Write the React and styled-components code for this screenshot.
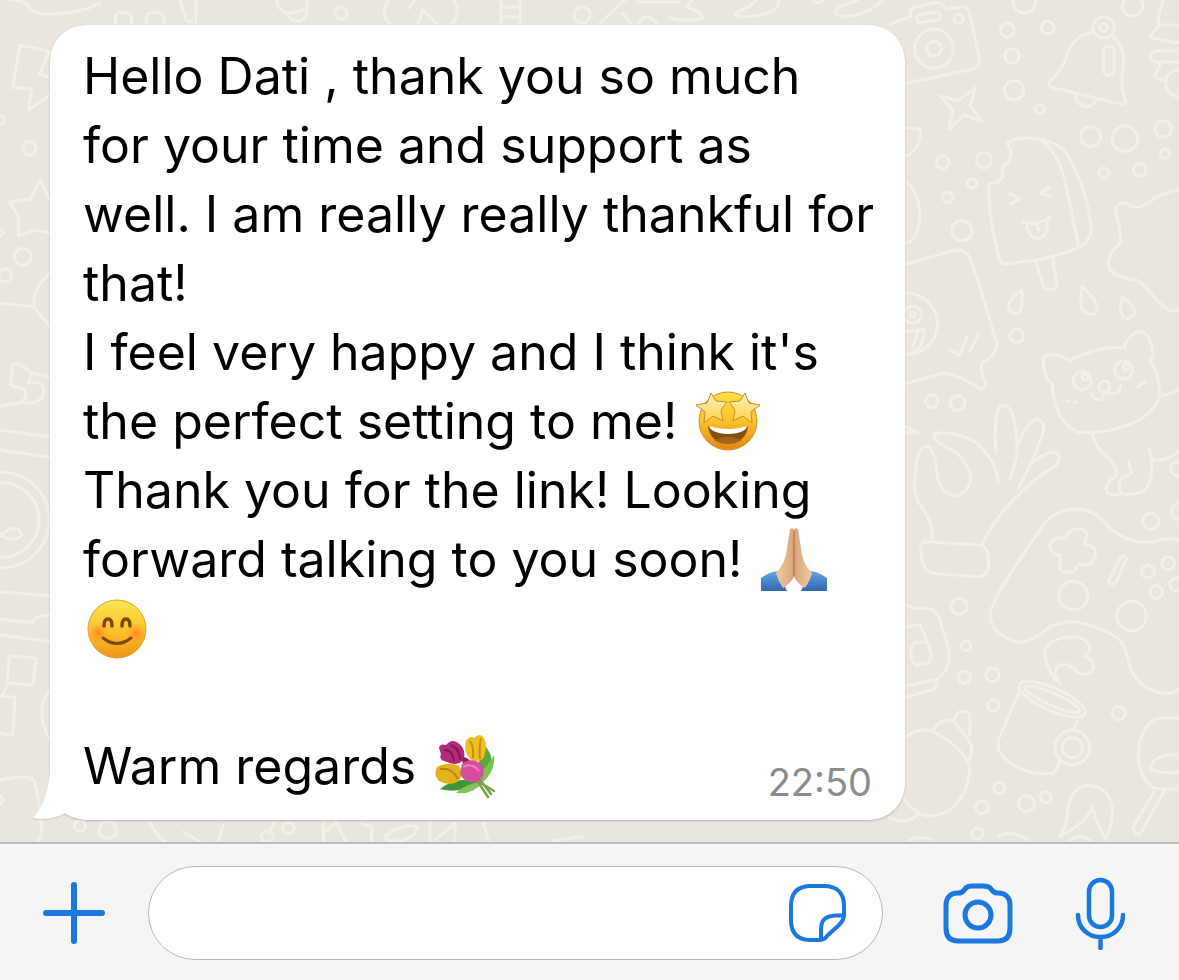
import React from "react";
import styled, { createGlobalStyle } from "styled-components";

const GlobalStyle = createGlobalStyle`
  * { box-sizing: border-box; }
  body { margin: 0; font-family: Inter, "Liberation Sans", sans-serif; }
`;

const Screen = styled.div`
  min-height: 100vh;
  display: flex;
  flex-direction: column;
`;

const Chat = styled.main`
  position: relative;
  flex: 1;
  padding: 25px 274px 22px 50px;
  background: #eae6dd;
  overflow: hidden;
`;

const Wallpaper = styled.svg`
  position: absolute;
  inset: 0;
  width: 100%;
  height: 100%;
  fill: none;
  stroke: #f4f0e9;
  stroke-width: 9;
  stroke-linecap: round;
  stroke-linejoin: round;
`;

const Bubble = styled.article`
  position: relative;
  padding: 17px 33px 19px;
  border-radius: 36px;
  background: #fff;
  box-shadow: 0 1px 2px rgba(60, 55, 45, 0.28);
`;

const Tail = styled.svg`
  position: absolute;
  left: -18px;
  bottom: 0;
  width: 60px;
  height: 50px;
  overflow: visible;
`;

const Message = styled.p`
  position: relative;
  margin: 0;
  min-height: 69px;
  font-size: 50px;
  line-height: 69px;
  color: #000;
  white-space: pre;
`;

const LastRow = styled.div`
  display: flex;
  justify-content: space-between;
  align-items: flex-end;
`;

const Time = styled.time`
  position: relative;
  font-size: 38px;
  line-height: 38px;
  color: #8b8b8e;
`;

const EmojiArt = styled.svg`
  width: 66px;
  height: 66px;
  margin-left: ${(p) => (p.$lineStart ? 0 : 4)}px;
  vertical-align: -15px;
`;

const Composer = styled.form`
  display: flex;
  align-items: center;
  padding: 22px 54px 20px 42px;
  border-top: 2px solid #bcbcb9;
  background: #f5f5f5;
`;

const IconButton = styled.button`
  flex: none;
  display: block;
  padding: 0;
  border: 0;
  background: none;
  margin-left: ${(p) => p.$gap || 0}px;
  svg {
    display: block;
    fill: none;
    stroke: #1a78de;
    stroke-linecap: round;
    stroke-linejoin: round;
  }
`;

const Field = styled.div`
  flex: 1;
  min-width: 0;
  display: flex;
  align-items: center;
  height: 94px;
  margin-left: 42px;
  padding: 0 35px;
  border: 1px solid #b8b8b8;
  border-radius: 47px;
  background: #fff;
`;

const TextInput = styled.input`
  flex: 1;
  width: 100%;
  min-width: 0;
  height: 80px;
  border: 0;
  outline: 0;
  background: transparent;
  font: 50px Inter, "Liberation Sans", sans-serif;
`;

const dots = (list) => list.map(([x, y, r]) => <circle key={`${x}-${y}-${r}`} cx={x} cy={y} r={r} />);

const Doodles = () => (
  <Wallpaper viewBox="0 0 1179 842" preserveAspectRatio="xMidYMid slice" aria-hidden="true">
    <g transform="translate(890 0) scale(0.3333)">
      <path d="M0 72L62 50Q56 25 80 20L135 8Q158 6 168 28L215 20Q236 20 240 45L268 175Q270 200 250 207L48 250" />
      <rect x="80" y="40" width="70" height="24" rx="10" transform="rotate(-8 115 52)" />
      {dots([[206, 57, 14], [132, 146, 58], [132, 146, 22], [403, 5, 34], [728, 18, 31], [352, 91, 21], [473, 83, 19], [366, 168, 22], [372, 271, 29], [450, 327, 14], [641, 82, 32], [641, 82, 12]])}
      <path d="M612 95Q550 105 530 165Q525 200 478 245Q472 258 485 262L700 314Q710 312 706 298Q690 260 698 210Q712 150 670 112M556 285Q560 318 590 320Q612 318 618 300" />
      <rect x="640" y="138" width="32" height="88" rx="16" />
      <path d="M150 288L205 302L257 262L240 318L278 366L222 345L177 388L188 330Z" />
      <path d="M820 0Q800 50 808 75H867M808 75L778 110Q800 120 867 128M867 152H800Q782 155 782 170Q784 186 800 186H867M812 190L795 225Q800 242 820 240" />
      {dots([[867, 250, 40], [602, 410, 30], [705, 416, 38], [820, 387, 25], [825, 461, 14], [641, 519, 15], [749, 510, 19], [158, 487, 19], [282, 480, 23], [246, 550, 14], [173, 592, 15], [216, 692, 30]])}
      <path d="M352 430Q372 412 420 415Q500 420 530 462Q590 560 603 680Q606 720 570 740Q520 765 440 780L345 793Q330 790 326 770Q290 620 298 552Q330 550 340 528Q330 495 355 488Q372 460 352 430M450 418Q500 450 525 540L566 740M438 785L460 860Q480 880 502 860L488 775M360 582L390 596L362 612M478 562L450 578L482 590M398 665Q440 680 480 652M410 672Q415 715 445 715Q475 712 472 662M440 672L446 690" />
      <path d="M867 570Q820 575 780 605Q740 635 712 612Q675 600 678 640Q695 700 690 730Q645 770 658 805Q680 835 740 840Q770 860 790 890Q830 930 840 932H867" />
      <path d="M48 383L92 388Q92 450 48 468M48 545Q90 580 90 650Q85 720 48 730M48 793L190 752Q235 745 245 790L265 845" />
    </g>
    <g transform="translate(890 280) scale(0.3333)">
      <path d="M265 5L320 190Q320 230 275 250Q270 270 288 310Q285 328 268 325Q210 285 162 280L48 310M48 155L102 148Q100 215 55 222M85 150L70 200M182 212L208 225L232 170M238 215L265 165" />
      {dots([[50, 132, 92], [68, 104, 26], [68, 104, 8], [380, 167, 20], [126, 364, 19], [203, 369, 22], [783, 724, 24], [577, 302, 27], [701, 270, 27], [585, 292, 9], [708, 262, 9], [643, 320, 16], [862, 566, 20], [870, 695, 25]])}
      <path d="M395 30Q352 60 356 85Q362 102 380 100Q402 95 395 30M577 20Q570 60 575 85Q590 108 615 100Q640 80 577 20M697 50Q685 90 700 112Q720 122 735 100Q735 80 697 50" />
      <path d="M540 243Q610 200 705 203Q700 180 745 153Q785 155 790 235L780 240Q812 290 808 350Q790 410 700 440Q620 465 560 455Q490 420 487 310Q460 300 460 230Q490 212 540 243M603 340Q610 362 635 358L645 335Q690 355 692 315M528 362h8m16 4h8M742 322L765 305M808 350L867 332M608 462Q615 500 660 540Q690 580 675 590Q640 610 652 640Q680 650 692 640Q680 600 700 592L725 580L715 545M692 640Q720 648 760 635Q790 610 785 540L778 505M785 540Q830 545 867 515" />
      <path d="M128 775Q125 720 100 690Q65 640 75 590Q80 500 108 498Q135 500 142 590Q150 640 200 648Q245 630 242 585Q220 525 180 508Q120 475 135 460Q200 450 260 490Q320 540 325 610M318 520Q310 400 330 380Q360 365 372 420Q385 490 380 530L362 595M385 490Q410 430 440 418Q470 425 458 460Q430 545 385 625M425 548Q470 515 495 515Q520 530 495 560Q440 590 390 640Q320 705 278 790M105 785L275 795Q300 810 295 860Q290 890 262 890L130 880Q90 870 92 800Q98 785 105 785" />
      <path d="M388 840L460 735Q500 685 560 688Q620 690 660 745Q720 795 790 785Q830 770 867 780M530 775Q532 748 562 746Q595 750 590 770L583 793Q618 798 617 820Q612 848 592 855L565 852L555 872Q530 885 510 868L512 828Q480 820 480 800Q485 775 505 774Z" />
      <path d="M690 835L655 905Q665 920 680 905L710 835Q700 820 690 835M48 440L85 458H48" />
    </g>
    <g transform="translate(890 560) scale(0.3333)">
      <path d="M388 0Q300 130 300 170Q310 230 390 247Q430 245 480 200Q540 170 620 203Q690 230 695 250Q710 270 720 320Q735 370 790 392Q830 410 867 390" />
      {dots([[550, 107, 43], [725, 168, 44], [774, 35, 19], [835, 10, 19], [799, 96, 19], [860, 74, 20], [208, 139, 24], [228, 257, 14], [223, 352, 18], [307, 345, 20], [310, 437, 17], [686, 460, 20], [328, 684, 17], [276, 742, 19], [409, 731, 24], [467, 711, 16], [262, 821, 16], [547, 563, 52], [547, 563, 30]])}
      <path d="M48 135L70 145H115Q150 155 155 200Q180 260 178 300Q170 340 140 358L48 378M140 358Q145 385 120 392L48 412M48 200L90 195L108 235M62 265L72 250L112 245L125 290L115 308L78 315L65 300Z" />
      <path d="M495 360Q460 300 465 270Q490 225 570 232Q605 250 598 275L585 288Q615 300 610 330Q590 350 565 338Q530 300 500 320L495 345L510 372M388 395L325 540Q320 570 340 590Q400 650 490 640Q505 625 510 595M560 485L552 510" />
      <ellipse cx="487" cy="418" rx="108" ry="34" transform="rotate(24 487 418)" />
      <ellipse cx="487" cy="418" rx="90" ry="18" transform="rotate(24 487 418)" />
      <path d="M48 530Q80 505 120 510Q220 560 238 620Q240 700 180 750Q110 790 60 740L40 715M130 510Q155 470 190 485Q235 530 245 560Q245 590 235 600M192 478Q200 445 235 458Q245 480 238 525M0 775Q50 795 85 765" />
      <path d="M867 475H800Q750 500 745 580Q745 650 790 685L867 688M867 585Q790 580 782 625Q790 640 867 638M795 690L730 800Q730 825 750 822L825 690M510 830Q530 800 535 740Q545 680 600 675Q660 685 668 750Q665 810 645 838Q620 790 605 740Q600 780 510 830M540 840Q570 820 600 840M325 830Q360 805 415 840M60 840Q90 828 125 838" />
    </g>
    <g transform="scale(0.3333)">
      <path d="M30 0Q75 0 85 20Q100 40 130 42Q230 45 300 10M150 285L85 330L95 268L38 262L60 135L148 155L118 222L150 232M150 600L120 540L92 598L28 605L55 650V708L110 690L150 700M0 910L100 920L150 980M150 820Q90 870 105 925M150 1130L95 1120Q50 1080 38 1095L32 1155L75 1170Q85 1200 55 1210L0 1218M95 1120L85 1150Q130 1140 132 1170Q130 1210 75 1210" />
      {dots([[88, 445, 20], [68, 770, 25], [15, 826, 20], [0, 360, 12], [0, 698, 10]])}
    </g>
    <g transform="translate(0 420) scale(0.3333)">
      <path d="M0 30L150 50M0 90L150 112M0 350Q20 330 40 325Q70 330 62 350Q30 370 0 340M0 515L150 528M0 598L95 608Q110 585 150 585M0 645L150 665M28 708L108 715L98 795L22 788ZM0 828L45 832L38 945L0 940M22 795L8 825M150 810Q100 870 150 960M0 1080Q60 1065 95 1075Q110 1085 122 1190Q130 1260 110 1262M0 1125L10 1140L0 1155" />
      {dots([[5, 300, 143], [5, 300, 112]])}
    </g>
    <g transform="translate(60 795) scale(0.3333)">
      <path d="M272 85Q290 125 315 140M370 110L420 140M490 90L475 140M640 85L625 115M790 75V140M825 75L858 140M790 115L825 85M905 85L935 95V140M975 125Q1020 85 1075 95Q1060 135 1010 138Q970 135 975 125M1110 85V140M1125 135L1185 85V140M1270 85L1285 138M1480 138L1568 125" />
      {dots([[60, 92, 16], [143, 105, 26], [622, 125, 18], [685, 100, 17]])}
    </g>
    <g style={{ strokeWidth: 3 }}>
      <path d="M116 24Q112 12 124 12Q134 14 131 24M147 24Q143 12 156 12Q167 14 163 24M180 0L186 20Q190 24 192 20M196 0V24M277 0Q277 10 287 13Q290 22 300 21Q309 18 307 0M286 12Q296 15 307 7M389 0Q379 13 390 24M418 24L423 10L437 24M453 0Q462 10 452 24M409 8L415 0M501 0V24M520 0V24M501 7H520M501 17H520M625 0L600 23M622 13L631 23M638 24Q647 10 657 24M638 2H679M692 0L686 7Q705 13 702 18Q689 23 670 18M778 0Q781 16 740 17Q727 15 749 7L756 0M883 0Q867 15 845 17Q829 15 839 7L858 0M813 0Q818 6 823 0" />
      <circle cx="341" cy="13" r="6" />
      <circle cx="582" cy="15" r="8" />
    </g>
  </Wallpaper>
);

const StarStruck = () => (
  <EmojiArt viewBox="0 0 66 66" role="img" aria-label="Star-struck face">
    <defs>
      <linearGradient id="starFace" x1="0" y1="0" x2="0" y2="1">
        <stop offset="0" stopColor="#fbe04a" />
        <stop offset="0.5" stopColor="#f9c22b" />
        <stop offset="1" stopColor="#e48414" />
      </linearGradient>
      <linearGradient id="starFill" x1="0" y1="0" x2="0" y2="1">
        <stop offset="0" stopColor="#fff3c0" />
        <stop offset="1" stopColor="#fbd046" />
      </linearGradient>
    </defs>
    <circle cx="33" cy="33" r="29" fill="url(#starFace)" stroke="#d98a1c" />
    <path d="M13 38Q33 44 53 38Q51 55 33 55Q15 55 13 38Z" fill="#80500e" />
    <path d="M14 38Q33 44 52 38Q51 45 33 46Q16 45 14 38Z" fill="#fff" />
    <path d="M19 52Q33 46 47 52Q41 56 33 56Q25 56 19 52Z" fill="#a4661a" />
    <g fill="url(#starFill)" stroke="#c98a28" strokeLinejoin="round">
      <path d="M16 5L21 13L32 14L26 22L28 33L18 28L9 35L10 24L1 17L12 15Z" />
      <path d="M50 5L45 13L34 14L40 22L38 33L48 28L57 35L56 24L65 17L54 15Z" />
    </g>
  </EmojiArt>
);

const FoldedHands = () => (
  <EmojiArt viewBox="0 0 66 66" role="img" aria-label="Folded hands">
    <defs>
      <linearGradient id="leftSkin" x1="0" y1="0" x2="1" y2="0">
        <stop offset="0" stopColor="#f0cba4" />
        <stop offset="1" stopColor="#d9a578" />
      </linearGradient>
      <linearGradient id="rightSkin" x1="1" y1="0" x2="0" y2="0">
        <stop offset="0" stopColor="#f0cba4" />
        <stop offset="1" stopColor="#d9a578" />
      </linearGradient>
      <linearGradient id="sleeve" x1="0" y1="0" x2="0" y2="1">
        <stop offset="0" stopColor="#66a5e2" />
        <stop offset="1" stopColor="#2e67b2" />
      </linearGradient>
    </defs>
    <path d="M0 52Q8 46 17 45L26 65H0ZM66 52Q58 46 49 45L40 65H66Z" fill="url(#sleeve)" />
    <path d="M29 3Q33 1 33 5V51Q29 58 22 62Q17 55 15 47Q25 37 26 22Z" fill="url(#leftSkin)" />
    <path d="M37 3Q33 1 33 5V51Q37 58 44 62Q49 55 51 47Q41 37 40 22Z" fill="url(#rightSkin)" />
    <path d="M33 5V50" stroke="#a56e43" />
  </EmojiArt>
);

const Smile = () => (
  <EmojiArt $lineStart viewBox="0 0 66 66" role="img" aria-label="Smiling face">
    <defs>
      <linearGradient id="smileFace" x1="0" y1="0" x2="0" y2="1">
        <stop offset="0" stopColor="#fce654" />
        <stop offset="0.55" stopColor="#fbc029" />
        <stop offset="1" stopColor="#f0941a" />
      </linearGradient>
      <radialGradient id="blush">
        <stop offset="0" stopColor="#fb6d1c" stopOpacity="0.7" />
        <stop offset="1" stopColor="#fb8a1c" stopOpacity="0" />
      </radialGradient>
    </defs>
    <circle cx="34" cy="34" r="29" fill="url(#smileFace)" stroke="#dfa030" />
    <circle cx="15" cy="38" r="10" fill="url(#blush)" />
    <circle cx="53" cy="38" r="10" fill="url(#blush)" />
    <g fill="none" stroke="#7a4a0a" strokeLinecap="round">
      <path d="M21 31Q21 24 25 24Q29 24 29 31M39 31Q39 24 43 24Q47 24 47 31" strokeWidth="3.5" />
      <path d="M20 43Q34 54 48 43" strokeWidth="3" />
    </g>
  </EmojiArt>
);

const Bouquet = () => (
  <EmojiArt viewBox="0 0 66 66" role="img" aria-label="Bouquet">
    <path d="M52 14Q62 26 54 40Q50 48 42 52Q42 28 52 14Z" fill="#5aa93c" />
    <path d="M44 42Q56 30 60 22Q62 38 48 50Z" fill="#79c452" />
    <path d="M6 56Q20 44 46 47Q28 62 6 56Z" fill="#3f9638" />
    <path d="M22 60Q32 50 48 49Q40 62 22 60Z" fill="#80c455" />
    <path d="M40 46L60 58M42 46L54 64M44 44L57 61" stroke="#76a344" strokeWidth="2.5" strokeLinecap="round" />
    <path d="M32 8Q36 2 40 5Q46 -1 50 5Q54 12 50 24Q44 32 36 26Q29 18 32 8Z" fill="#edbf22" />
    <path d="M36 8Q40 14 39 25M47 5Q45 14 46 26" fill="none" stroke="#c58e10" strokeWidth="2" />
    <path d="M5 15Q6 10 12 12Q18 5 24 10Q32 15 30 26Q24 34 13 29Q4 27 7 21Z" fill="#b42a78" />
    <path d="M10 17Q18 16 20 28M17 12Q26 16 26 27" fill="none" stroke="#7d174f" strokeWidth="2" />
    <path d="M3 34Q10 29 24 32Q31 40 25 48Q16 54 5 48Q-1 42 3 34Z" fill="#e3b31c" />
    <path d="M6 36Q18 34 24 46" fill="none" stroke="#b98412" strokeWidth="2" />
    <path d="M27 24Q34 23 38 31L30 34Z" fill="#8f2452" />
    <path d="M28 31Q38 23 48 32Q53 44 43 49Q31 51 26 41Z" fill="#d84c9c" />
    <path d="M29 34Q38 29 45 38" fill="none" stroke="#f083bf" strokeWidth="2" />
  </EmojiArt>
);

export default function App() {
  return (
    <>
      <GlobalStyle />
      <Screen>
        <Chat>
          <Doodles />
          <Bubble>
            <Tail viewBox="0 0 60 50" aria-hidden="true">
              <path d="M18 0Q17 30 1 48Q18 51 33 43L44 30V0Z" fill="#fff" />
              <path d="M1 49Q18 52 33 44Q40 49 50 50" fill="none" stroke="#d2cfc8" />
            </Tail>
            <Message>{"Hello Dati , thank you so much\nfor your time and support as\nwell. I am really really thankful for\nthat!"}</Message>
            <Message>{"I feel very happy and I think it's\nthe perfect setting to me! "}<StarStruck /></Message>
            <Message>{"Thank you for the link! Looking\nforward talking to you soon! "}<FoldedHands />{"\n"}<Smile /></Message>
            <Message />
            <LastRow>
              <Message>{"Warm regards "}<Bouquet /></Message>
              <Time dateTime="22:50">22:50</Time>
            </LastRow>
          </Bubble>
        </Chat>
        <Composer onSubmit={(e) => e.preventDefault()}>
          <IconButton type="button" aria-label="Add attachment">
            <svg width="64" height="64" strokeWidth="6"><path d="M4 32H60M32 4V60" /></svg>
          </IconButton>
          <Field>
            <TextInput type="text" aria-label="Message" />
            <IconButton type="button" aria-label="Stickers">
              <svg width="58" height="58" strokeWidth="4">
                <path d="M32 56H22C8 56 2 49 2 36V22C2 8 9 2 22 2H35C48 2 55 9 55 22V31C55 35 53 38 50 41L39 51C37 54 35 56 31 56M55 31.5H47C36 32 32 36 32 46V56" />
              </svg>
            </IconButton>
          </Field>
          <IconButton type="button" aria-label="Camera" $gap={60}>
            <svg width="70" height="61" strokeWidth="5">
              <path d="M15 10C20 10 20 8 22 6C24 3 26 3 29 3H40C43 3 46 3 48 6C50 8 50 10 55 10C63 10 67 15 67 22V45Q67 58 55 58H15Q3 58 3 45V22C3 15 7 10 15 10Z" />
              <circle cx="35" cy="32" r="13" />
            </svg>
          </IconButton>
          <IconButton type="button" aria-label="Record voice message" $gap={62}>
            <svg width="50" height="74" strokeWidth="4.5">
              <rect x="14" y="4" width="23" height="47" rx="11.5" />
              <path d="M3 39C3 52 13 61 25.5 61C38 61 48 52 48 39M25.5 61V72" />
            </svg>
          </IconButton>
        </Composer>
      </Screen>
    </>
  );
}
